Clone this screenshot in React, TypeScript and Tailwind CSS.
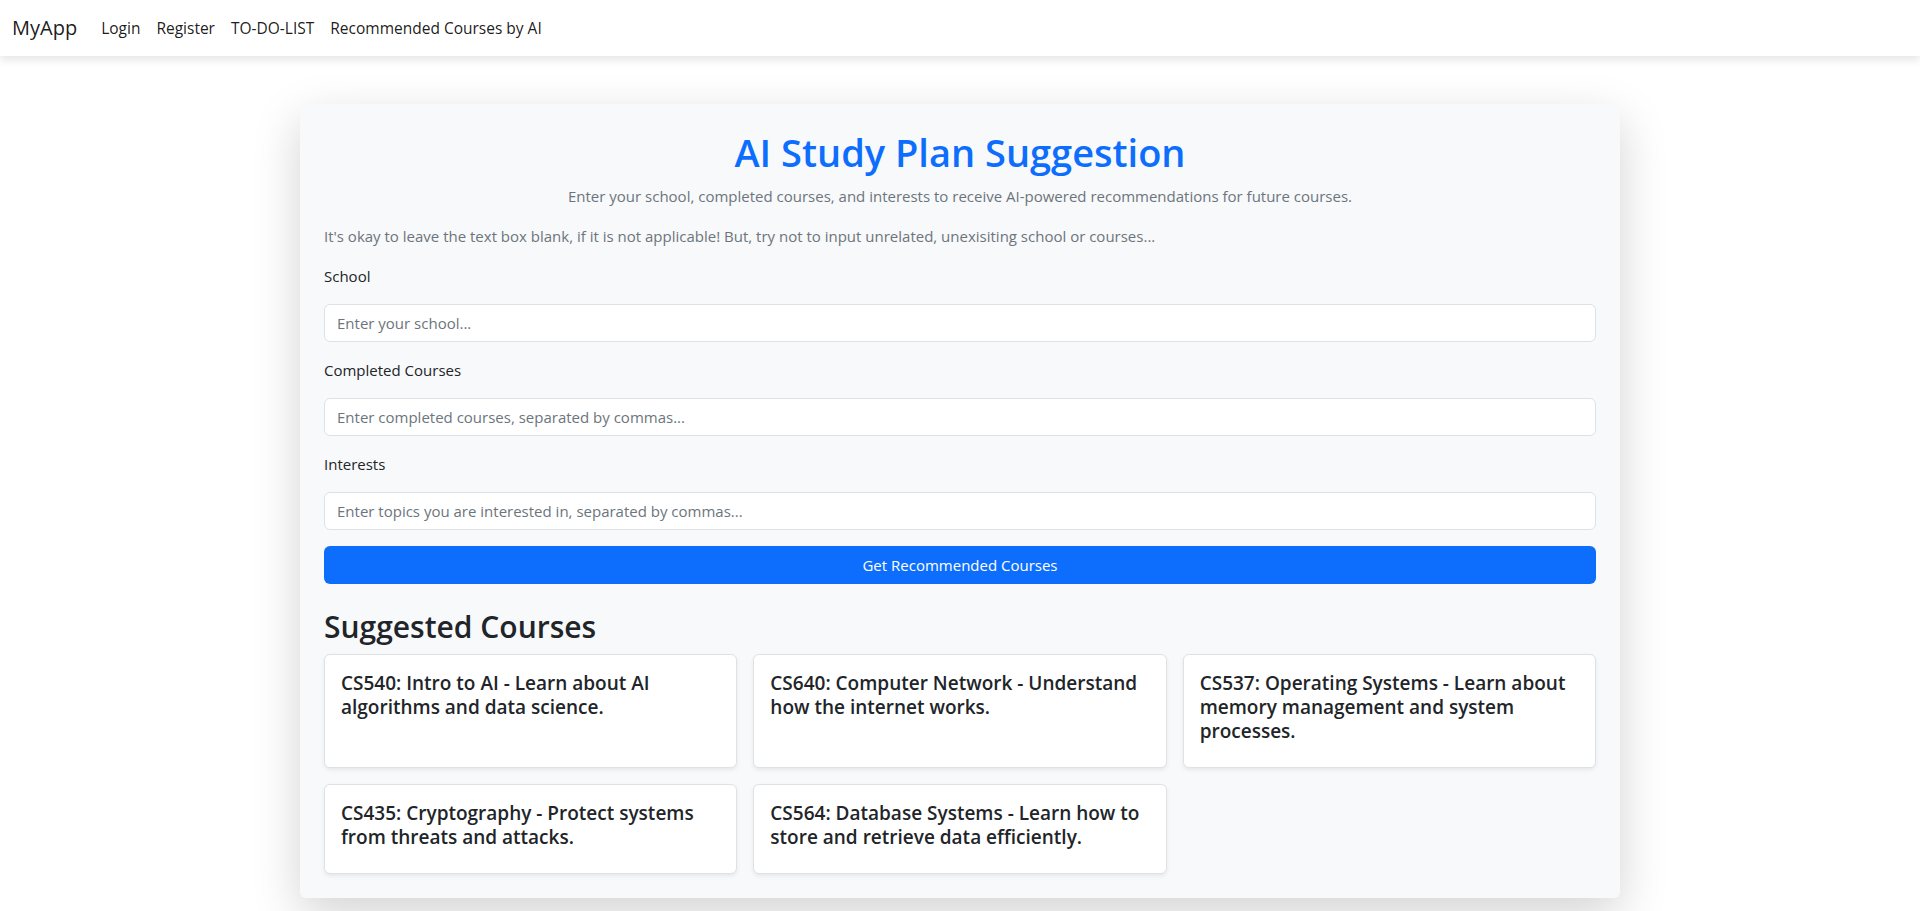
const courses = [
  "CS540: Intro to AI - Learn about AI algorithms and data science.",
  "CS640: Computer Network - Understand how the internet works.",
  "CS537: Operating Systems - Learn about memory management and system processes.",
  "CS435: Cryptography - Protect systems from threats and attacks.",
  "CS564: Database Systems - Learn how to store and retrieve data efficiently.",
];

function Navbar() {
  return (
    <nav className="h-14 bg-white shadow-[0_4px_8px_rgba(0,0,0,0.1)] flex items-center px-3 relative z-10">
      <span className="text-[20px] text-black/90 mr-4">MyApp</span>
      <div className="flex items-center">
        <a className="px-2 text-[15.5px] text-black/90">Login</a>
        <a className="px-2 text-[15.5px] text-black/90">Register</a>
        <a className="px-2 text-[15.5px] text-black/90">TO-DO-LIST</a>
        <a className="px-2 text-[15.5px] text-black/90">Recommended Courses by AI</a>
      </div>
    </nav>
  );
}

function Field({ label, placeholder }: { label: string; placeholder: string }) {
  return (
    <>
      <label className="block mb-4 text-[#212529]">{label}</label>
      <input
        className="block w-full h-[38px] mb-4 px-3 rounded-md border border-[#dee2e6] bg-white text-[15px] placeholder:text-[#6c757d] outline-none"
        placeholder={placeholder}
      />
    </>
  );
}

export default function App() {
  return (
    <div className="min-h-screen bg-white font-['Segoe_UI','Open_Sans',sans-serif] text-[#212529] text-[15px] leading-6">
      <Navbar />
      <div className="w-[1320px] mx-auto mt-12 p-6 bg-[#f8f9fa] rounded-md shadow-[0_1rem_3rem_rgba(0,0,0,0.175)]">
        <h1 className="text-[38px] leading-[48px] font-semibold text-[#0d6efd] text-center mb-2">
          AI Study Plan Suggestion
        </h1>
        <p className="text-center text-[#6c757d] mb-4">
          Enter your school, completed courses, and interests to receive AI-powered recommendations for future courses.
        </p>
        <p className="text-[#6c757d] mb-4">
          It's okay to leave the text box blank, if it is not applicable! But, try not to input unrelated, unexisiting school or courses...
        </p>
        <Field label="School" placeholder="Enter your school..." />
        <Field label="Completed Courses" placeholder="Enter completed courses, separated by commas..." />
        <Field label="Interests" placeholder="Enter topics you are interested in, separated by commas..." />
        <button className="w-full h-[38px] rounded-md bg-[#0d6efd] text-white text-[15px]">
          Get Recommended Courses
        </button>
        <h2 className="text-[30px] leading-[38px] font-semibold mt-6 mb-2">Suggested Courses</h2>
        <div className="grid grid-cols-3 gap-4">
          {courses.map((c) => (
            <div
              key={c}
              className="bg-white border border-[#dee2e6] rounded-md shadow-[0_0.125rem_0.25rem_rgba(0,0,0,0.075)] p-4"
            >
              <h5 className="text-[19px] leading-6 font-semibold mb-2">{c}</h5>
            </div>
          ))}
        </div>
      </div>
    </div>
  );
}
